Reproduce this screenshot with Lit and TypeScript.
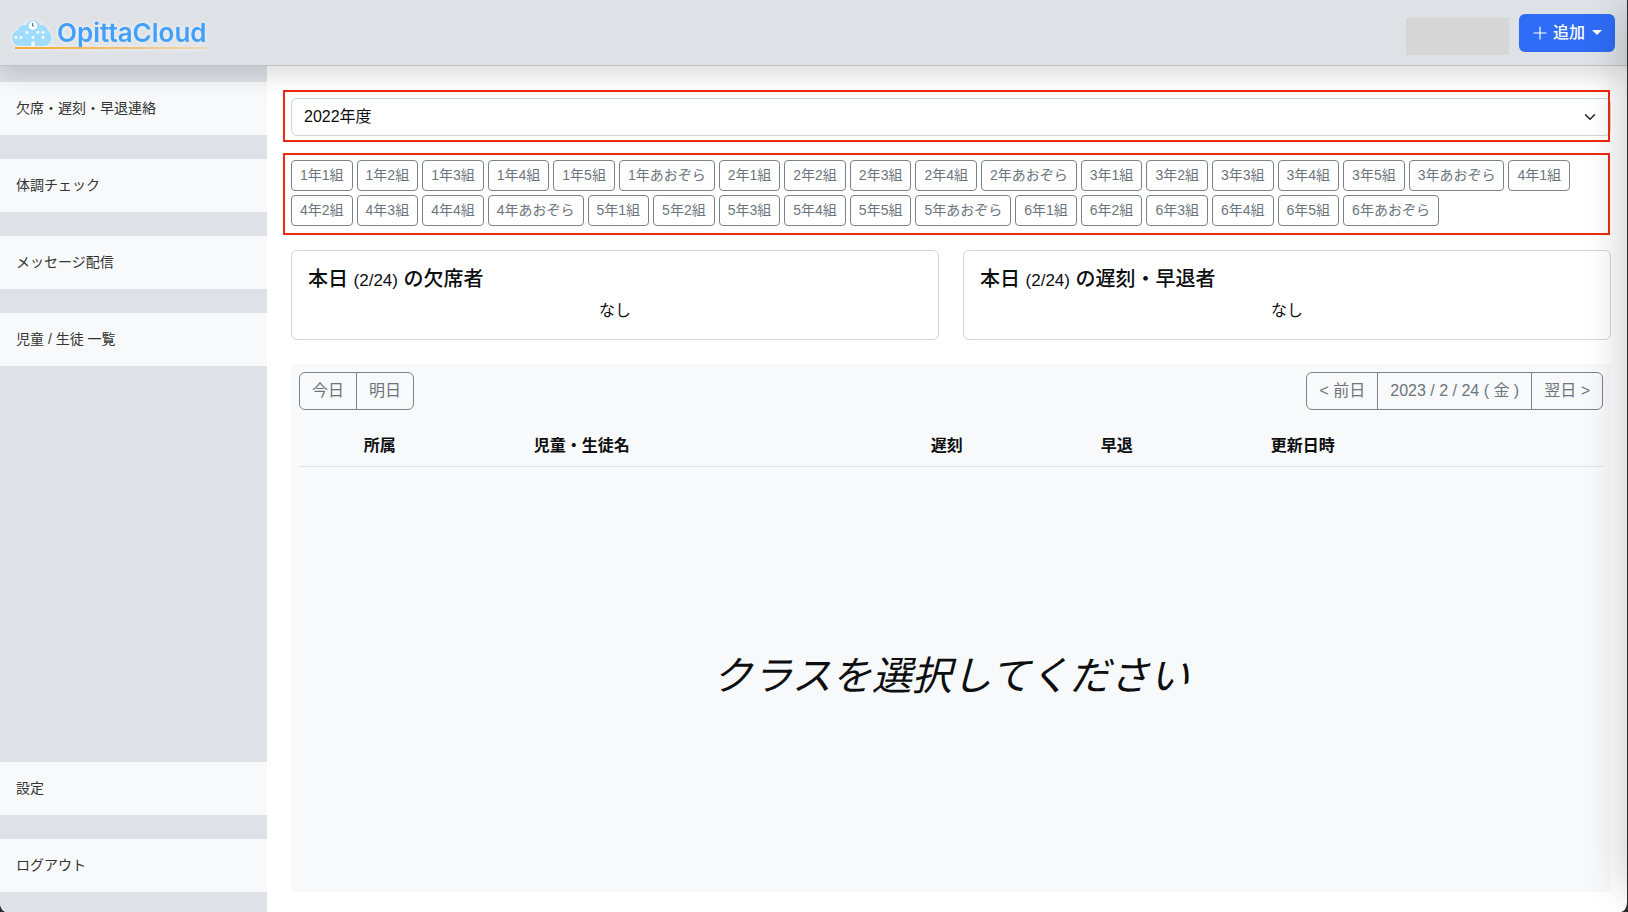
import { LitElement, html, css, svg } from "lit";
import { customElement, property, state } from "lit/decorators.js";
import { classMap } from "lit/directives/class-map.js";

const GRADES: Array<[number, number]> = [[1, 5], [2, 4], [3, 5], [4, 4], [5, 5], [6, 5]];

const CLASSES: string[] = GRADES.flatMap(([grade, count]) => [
  ...Array.from({ length: count }, (_, i) => `${grade}年${i + 1}組`),
  `${grade}年あおぞら`,
]);

const WINDOWS = [[16, 36], [21, 36], [27, 31], [33, 36], [38, 31], [43, 31], [43, 36]];

@customElement("app-logo")
export class AppLogo extends LitElement {
  static styles = css`
    :host { display: block; }
    .logo {
      display: grid;
      grid-template-columns: 40px auto;
      column-gap: 5px;
      align-items: center;
      padding-top: 2px;
      text-decoration: none;
      color: #429ffb;
      filter: drop-shadow(0 0 2px rgba(255, 255, 255, 0.8));
    }
    .cloud { display: block; width: 40px; height: 28px; }
    .name { font-family: Inter, "Liberation Sans", sans-serif; font-size: 26px; line-height: 28px; font-weight: 600; }
    .rule {
      grid-column: 1 / -1;
      height: 2px;
      margin-left: 3px;
      background: linear-gradient(90deg, #f5ac2c, #f3bd66 50%, #ecd9bc);
    }
  `;

  render() {
    return html`
      <a class="logo" href="#">
        <svg class="cloud" viewBox="12 18 40 28" aria-hidden="true">
          <path fill="#a0dcfd" d="M20 45a8 8 0 0 1-8-8c0-4 2.500-7 6-8 1-4 4-5.500 8-5 1-3 4-5 7-5s6 2 7 5c4-.5 7 1.500 7.500 5 2.500 1.500 4 4.500 4 7.500 0 5-3.500 8.500-8 8.500z"/>
          <circle cx="33" cy="24.500" r="4.300" fill="#fff"/>
          <path d="M32.500 22v3h1.800" fill="none" stroke="#667" stroke-width="1"/>
          ${WINDOWS.map(([x, y]) => svg`<circle cx=${x} cy=${y + 0.5} r="1.400" fill="#fff"/>`)}
          <path d="M31.500 45v-4.500h3V45z" fill="#fff"/>
        </svg>
        <span class="name">OpittaCloud</span>
        <span class="rule"></span>
      </a>
    `;
  }
}

@customElement("summary-card")
export class SummaryCard extends LitElement {
  @property() date = "";
  @property() label = "";

  static styles = css`
    :host {
      display: block;
      box-sizing: border-box;
      padding: 16px;
      border: 1px solid #d2d4d6;
      border-radius: 6px;
      background: #fff;
    }
    .title { margin: 0 0 8px; font-size: 20px; line-height: 24px; font-weight: 500; }
    .date { font-size: 17px; line-height: 1; }
    .value { margin: 0; font-size: 16px; line-height: 24px; text-align: center; }
  `;

  render() {
    return html`
      <h2 class="title">本日 <span class="date">(${this.date})</span> の${this.label}</h2>
      <p class="value">なし</p>
    `;
  }
}

@customElement("app-root")
export class AppRoot extends LitElement {
  @state() private selected = "";

  static styles = css`
    :host {
      display: block;
      box-sizing: border-box;
      padding-right: 1px;
      background: #2b2b2f;
      color: #0c0e10;
      font-family: "Liberation Sans", "Noto Sans CJK JP", sans-serif;
      font-size: 16px;
      line-height: 24px;
    }
    * { box-sizing: border-box; }
    button, select { font: inherit; color: inherit; margin: 0; }
    .shell {
      position: relative;
      display: grid;
      grid-template: auto 1fr / 267px minmax(0, 1fr);
      min-height: 100vh;
      overflow: hidden;
      background: #fff;
      border-radius: 0 0 6px 6px / 0 0 10px 10px;
    }
    .header {
      position: relative;
      z-index: 1;
      grid-column: 1 / -1;
      display: flex;
      align-items: center;
      gap: 10px;
      height: 66px;
      padding: 0 12px;
      border-bottom: 1px solid #bfc4ca;
      background: #dee2e6;
      box-shadow: 0 8px 24px rgba(0, 0, 0, 0.15);
    }
    .account { width: 103px; height: 37px; margin: 7px 0 0 auto; background: #d6d6d6; }
    .add {
      display: flex;
      align-items: center;
      height: 38px;
      padding: 0 13px 0 14px;
      border: 0;
      border-radius: 6px;
      background: #2e6cf6;
      color: #fff;
      font-weight: 500;
    }
    .plus { width: 14px; height: 14px; margin-right: 6px; }
    .caret {
      margin-left: 7px;
      border: 5px solid transparent;
      border-top-color: #fff;
      border-bottom: 0;
    }
    .sidebar {
      display: flex;
      flex-direction: column;
      gap: 24px;
      padding: 16px 0 20px;
      background: #dee2e6;
    }
    .item {
      padding: 16px;
      background: #f8f9fa;
      color: #333;
      font-size: 14px;
      line-height: 21px;
      text-decoration: none;
    }
    .push { margin-top: auto; }
    .main {
      display: flex;
      flex-direction: column;
      gap: 24px;
      padding: 32px 16px 20px 24px;
    }
    .marked { position: relative; }
    .marked::after {
      content: "";
      position: absolute;
      inset: -8px 1px -6px -8px;
      border: 2px solid #ee2a10;
      pointer-events: none;
    }
    .classes.marked::after { inset: -7px 1px -9px -8px; }
    .year { display: block; }
    .select {
      display: block;
      width: 100%;
      height: 38px;
      padding: 0 36px 0 12px;
      border: 1px solid #ced4da;
      border-radius: 6px;
      appearance: none;
      background: #fff;
    }
    .chevron {
      position: absolute;
      top: 13px;
      right: 13px;
      width: 16px;
      height: 12px;
      pointer-events: none;
    }
    .classes { display: flex; flex-wrap: wrap; gap: 4px; }
    .class {
      height: 31px;
      padding: 0 8px;
      border: 1px solid #7b838a;
      border-radius: 4px;
      background: #fff;
      color: #6c757d;
      font-size: 14px;
      line-height: 21px;
    }
    .class.on { background: #6c757d; color: #fff; }
    .cards { display: grid; grid-template-columns: 1fr 1fr; gap: 24px; }
    .panel {
      flex: 1;
      display: flex;
      flex-direction: column;
      padding: 8px;
      background: #f8f9fa;
    }
    .toolbar { display: flex; justify-content: space-between; }
    .group { display: flex; }
    .day {
      height: 38px;
      padding: 0 12px;
      border: 1px solid #7b838a;
      background: none;
      color: #6c757d;
    }
    .day + .day { margin-left: -1px; }
    .day:first-child { border-radius: 6px 0 0 6px; }
    .day:last-child { border-radius: 0 6px 6px 0; }
    .table {
      width: 100%;
      margin-top: 16px;
      border-collapse: collapse;
      table-layout: fixed;
    }
    .table th { padding: 8px; border-bottom: 1px solid #dee2e6; text-align: left; font-weight: 700; }
    .w1 { width: 4.348%; }
    .w3 { width: 13.043%; }
    .w7 { width: 30.435%; }
    .message {
      flex: 1;
      display: grid;
      place-items: center;
      margin: 0;
      font-size: 40px;
      line-height: 48px;
      font-style: italic;
      font-weight: 400;
    }
    .drawer {
      position: absolute;
      z-index: 2;
      top: 0;
      bottom: 32px;
      left: 100%;
      width: 320px;
      box-shadow: 0 8px 40px rgba(0, 0, 0, 0.24);
    }
  `;

  render() {
    return html`
      <div class="shell">
        <header class="header">
          <app-logo></app-logo>
          <div class="account"></div>
          <button class="add" type="button">
            <svg class="plus" viewBox="0 0 14 14" aria-hidden="true">
              <path d="M7 1v12M1 7h12" stroke="#fff" stroke-width="1.200" stroke-linecap="round"/>
            </svg>
            追加
            <span class="caret"></span>
          </button>
        </header>

        <nav class="sidebar">
          <a class="item" href="#absence">欠席・遅刻・早退連絡</a>
          <a class="item" href="#health">体調チェック</a>
          <a class="item" href="#message">メッセージ配信</a>
          <a class="item" href="#students">児童 / 生徒 一覧</a>
          <a class="item push" href="#settings">設定</a>
          <a class="item" href="#logout">ログアウト</a>
        </nav>

        <main class="main">
          <div class="year marked">
            <select class="select" aria-label="年度">
              <option>2022年度</option>
            </select>
            <svg class="chevron" viewBox="0 0 16 16" preserveAspectRatio="xMidYMid meet" aria-hidden="true">
              <path d="m2 5 6 6 6-6" fill="none" stroke="#212529" stroke-width="2" stroke-linecap="round" stroke-linejoin="round"/>
            </svg>
          </div>

          <div class="classes marked">
            ${CLASSES.map(
              (name) => html`<button
                type="button"
                class=${classMap({ class: true, on: name === this.selected })}
                @click=${() => (this.selected = name)}
              >${name}</button>`
            )}
          </div>

          <div class="cards">
            <summary-card date="2/24" label="欠席者"></summary-card>
            <summary-card date="2/24" label="遅刻・早退者"></summary-card>
          </div>

          <section class="panel">
            <div class="toolbar">
              <div class="group">
                <button class="day" type="button">今日</button>
                <button class="day" type="button">明日</button>
              </div>
              <div class="group">
                <button class="day" type="button">&lt; 前日</button>
                <button class="day" type="button">2023 / 2 / 24 ( 金 )</button>
                <button class="day" type="button">翌日 &gt;</button>
              </div>
            </div>
            <table class="table">
              <thead>
                <tr>
                  <th class="w1"></th>
                  <th class="w3">所属</th>
                  <th class="w7">児童・生徒名</th>
                  <th class="w3">遅刻</th>
                  <th class="w3">早退</th>
                  <th>更新日時</th>
                </tr>
              </thead>
            </table>
            <p class="message">クラスを選択してください</p>
          </section>
        </main>
        <div class="drawer"></div>
      </div>
    `;
  }
}
